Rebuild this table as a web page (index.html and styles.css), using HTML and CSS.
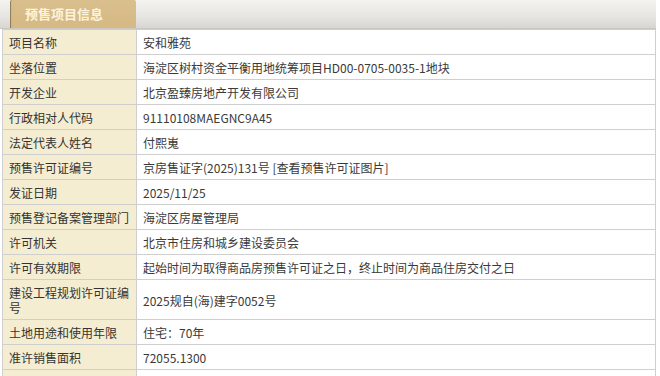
FILE: index.html
```html
<!DOCTYPE html>
<html lang="zh">
<head>
<meta charset="utf-8">
<link rel="stylesheet" href="styles.css">
</head>
<body>
<div class="page">
  <div class="head">
    <div class="tab">预售项目信息</div>
  </div>
  <table class="info">
    <colgroup><col class="c-label"><col></colgroup>
    <tr><td class="label">项目名称</td><td>安和雅苑</td></tr>
    <tr><td class="label">坐落位置</td><td>海淀区树村资金平衡用地统筹项目HD00-0705-0035-1地块</td></tr>
    <tr><td class="label">开发企业</td><td>北京盈臻房地产开发有限公司</td></tr>
    <tr><td class="label">行政相对人代码</td><td>91110108MAEGNC9A45</td></tr>
    <tr><td class="label">法定代表人姓名</td><td>付熙嵬</td></tr>
    <tr><td class="label">预售许可证编号</td><td>京房售证字(2025)131号 [查看预售许可证图片]</td></tr>
    <tr><td class="label">发证日期</td><td>2025/11/25</td></tr>
    <tr><td class="label">预售登记备案管理部门</td><td>海淀区房屋管理局</td></tr>
    <tr><td class="label">许可机关</td><td>北京市住房和城乡建设委员会</td></tr>
    <tr><td class="label">许可有效期限</td><td>起始时间为取得商品房预售许可证之日，终止时间为商品住房交付之日</td></tr>
    <tr><td class="label">建设工程规划许可证编号</td><td>2025规自(海)建字0052号</td></tr>
    <tr><td class="label">土地用途和使用年限</td><td>住宅：70年</td></tr>
    <tr><td class="label">准许销售面积</td><td>72055.1300</td></tr>
    <tr><td class="label">&nbsp;</td><td>&nbsp;</td></tr>
  </table>
</div>
</body>
</html>
```

FILE: styles.css
```css
html, body {
  margin: 0;
  padding: 0;
  background: #ffffff;
}
body {
  font-family: "Noto Sans CJK SC", "Noto Sans", sans-serif;
  font-size: 12px;
  color: #333333;
}
.page {
  width: 656px;
}
.head {
  height: 28px;
  background: linear-gradient(to bottom, #f4f3f0 0%, #e6e5e1 60%, #d8d6d1 100%);
  border-bottom: 1px solid #c9c7c2;
  padding-left: 10px;
}
.tab {
  width: 126px;
  height: 28px;
  box-sizing: border-box;
  padding-left: 15px;
  line-height: 28px;
  font-size: 13px;
  font-weight: bold;
  color: #fbf3df;
  background: linear-gradient(to bottom, #d9bf8d 0%, #d6b984 100%);
  box-shadow: inset 2px 0 1px -1px #8a7a5c;
  border-top-left-radius: 2px;
  border-top-right-radius: 2px;
}
.info {
  margin-left: 2px;
  width: 654px;
  border-collapse: collapse;
  table-layout: fixed;
}
.c-label {
  width: 134px;
}
.info td {
  border: 1px solid #cfcfcf;
  padding: 5px 6px 4px 6px;
  line-height: 15px;
  vertical-align: middle;
  color: #3a3a3a;
  background: #ffffff;
}
.info td.label {
  background: #f5edd1;
  color: #333333;
}
```
